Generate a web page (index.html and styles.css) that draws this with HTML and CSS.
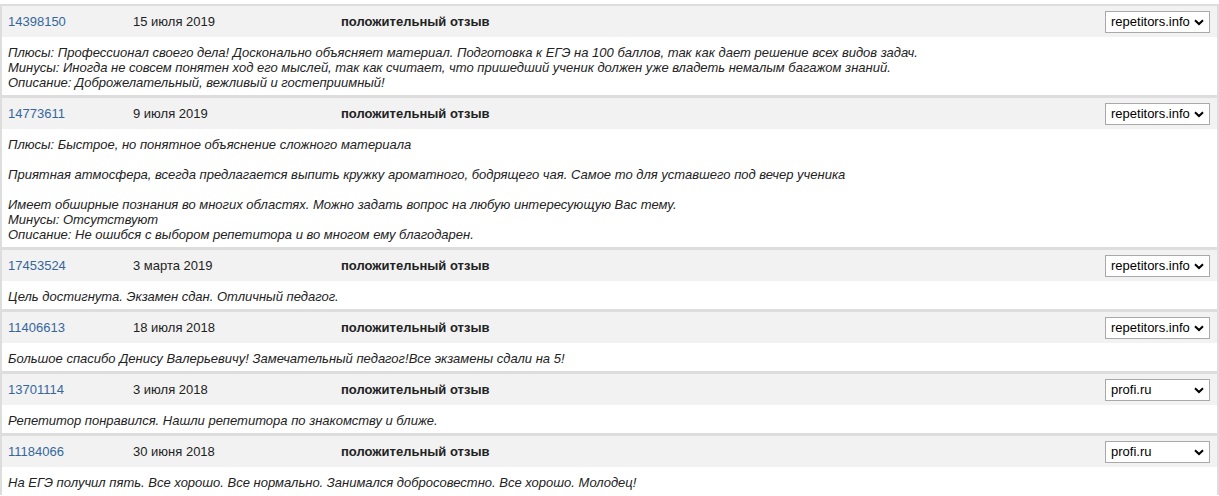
FILE: index.html
```html
<!DOCTYPE html>
<html lang="ru">
<head>
  <meta charset="UTF-8" />
  <title>Отзывы</title>
  <link rel="stylesheet" href="styles.css">
</head>
<body>
  <div class="reviews">
    <div class="review">
      <div class="review-head">
        <a href="#" class="review-id">14398150</a>
        <span class="review-date">15 июля 2019</span>
        <span class="review-type">положительный отзыв</span>
        <span class="source">
          <select><option>repetitors.info</option><option>profi.ru</option></select>
          <svg class="arrow" width="10" height="7" viewBox="0 0 10 7"><path d="M1 1.2 L5 5 L9 1.2" fill="none" stroke="#000" stroke-width="2"/></svg>
        </span>
      </div>
      <div class="review-text">
        Плюсы: Профессионал своего дела! Досконально объясняет материал. Подготовка к ЕГЭ на 100 баллов, так как дает решение всех видов задач.<br>
        Минусы: Иногда не совсем понятен ход его мыслей, так как считает, что пришедший ученик должен уже владеть немалым багажом знаний.<br>
        Описание: Доброжелательный, вежливый и гостеприимный!
      </div>
    </div>

    <div class="review">
      <div class="review-head">
        <a href="#" class="review-id">14773611</a>
        <span class="review-date">9 июля 2019</span>
        <span class="review-type">положительный отзыв</span>
        <span class="source">
          <select><option>repetitors.info</option><option>profi.ru</option></select>
          <svg class="arrow" width="10" height="7" viewBox="0 0 10 7"><path d="M1 1.2 L5 5 L9 1.2" fill="none" stroke="#000" stroke-width="2"/></svg>
        </span>
      </div>
      <div class="review-text">
        Плюсы: Быстрое, но понятное объяснение сложного материала<br>
        <br>
        Приятная атмосфера, всегда предлагается выпить кружку ароматного, бодрящего чая. Самое то для уставшего под вечер ученика<br>
        <br>
        Имеет обширные познания во многих областях. Можно задать вопрос на любую интересующую Вас тему.<br>
        Минусы: Отсутствуют<br>
        Описание: Не ошибся с выбором репетитора и во многом ему благодарен.
      </div>
    </div>

    <div class="review">
      <div class="review-head">
        <a href="#" class="review-id">17453524</a>
        <span class="review-date">3 марта 2019</span>
        <span class="review-type">положительный отзыв</span>
        <span class="source">
          <select><option>repetitors.info</option><option>profi.ru</option></select>
          <svg class="arrow" width="10" height="7" viewBox="0 0 10 7"><path d="M1 1.2 L5 5 L9 1.2" fill="none" stroke="#000" stroke-width="2"/></svg>
        </span>
      </div>
      <div class="review-text">Цель достигнута. Экзамен сдан. Отличный педагог.</div>
    </div>

    <div class="review">
      <div class="review-head">
        <a href="#" class="review-id">11406613</a>
        <span class="review-date">18 июля 2018</span>
        <span class="review-type">положительный отзыв</span>
        <span class="source">
          <select><option>repetitors.info</option><option>profi.ru</option></select>
          <svg class="arrow" width="10" height="7" viewBox="0 0 10 7"><path d="M1 1.2 L5 5 L9 1.2" fill="none" stroke="#000" stroke-width="2"/></svg>
        </span>
      </div>
      <div class="review-text">Большое спасибо Денису Валерьевичу! Замечательный педагог!Все экзамены сдали на 5!</div>
    </div>

    <div class="review">
      <div class="review-head">
        <a href="#" class="review-id">13701114</a>
        <span class="review-date">3 июля 2018</span>
        <span class="review-type">положительный отзыв</span>
        <span class="source">
          <select><option>profi.ru</option><option>repetitors.info</option></select>
          <svg class="arrow" width="10" height="7" viewBox="0 0 10 7"><path d="M1 1.2 L5 5 L9 1.2" fill="none" stroke="#000" stroke-width="2"/></svg>
        </span>
      </div>
      <div class="review-text">Репетитор понравился. Нашли репетитора по знакомству и ближе.</div>
    </div>

    <div class="review">
      <div class="review-head">
        <a href="#" class="review-id">11184066</a>
        <span class="review-date">30 июня 2018</span>
        <span class="review-type">положительный отзыв</span>
        <span class="source">
          <select><option>profi.ru</option><option>repetitors.info</option></select>
          <svg class="arrow" width="10" height="7" viewBox="0 0 10 7"><path d="M1 1.2 L5 5 L9 1.2" fill="none" stroke="#000" stroke-width="2"/></svg>
        </span>
      </div>
      <div class="review-text">На ЕГЭ получил пять. Все хорошо. Все нормально. Занимался добросовестно. Все хорошо. Молодец!</div>
    </div>
  </div>
</body>
</html>
```

FILE: styles.css
```css
body {
  margin: 0;
  padding-top: 4px;
  font-family: "Liberation Sans", Arial, sans-serif;
  font-size: 13px;
  color: #222;
  background: #fff;
}
.reviews {
  display: flex;
  flex-direction: column;
  gap: 3px;
  background: #dddddd;
  padding: 2px 2px 0;
}
.review {
  background: #fff;
}
.review-head {
  display: grid;
  grid-template-columns: 125px 208px 1fr auto;
  align-items: center;
  height: 31px;
  padding: 0 7px 0 6px;
  background: #f2f2f2;
  line-height: 15px;
}
.review-id {
  color: #35679c;
  text-decoration: none;
}
.review-type {
  font-weight: bold;
}
.source {
  position: relative;
  display: block;
}
.source select {
  appearance: none;
  -webkit-appearance: none;
  display: block;
  width: 105px;
  height: 22px;
  margin: 0;
  padding: 0 0 0 5px;
  border: 1px solid #a9a9a9;
  border-radius: 0;
  background: #fff;
  color: #000;
  font-family: "Liberation Sans", Arial, sans-serif;
  font-size: 13px;
}
.source .arrow {
  position: absolute;
  right: 6px;
  top: 8px;
  pointer-events: none;
}
.review-text {
  padding: 8px 6px 5px;
  line-height: 15px;
  font-style: italic;
}
```
